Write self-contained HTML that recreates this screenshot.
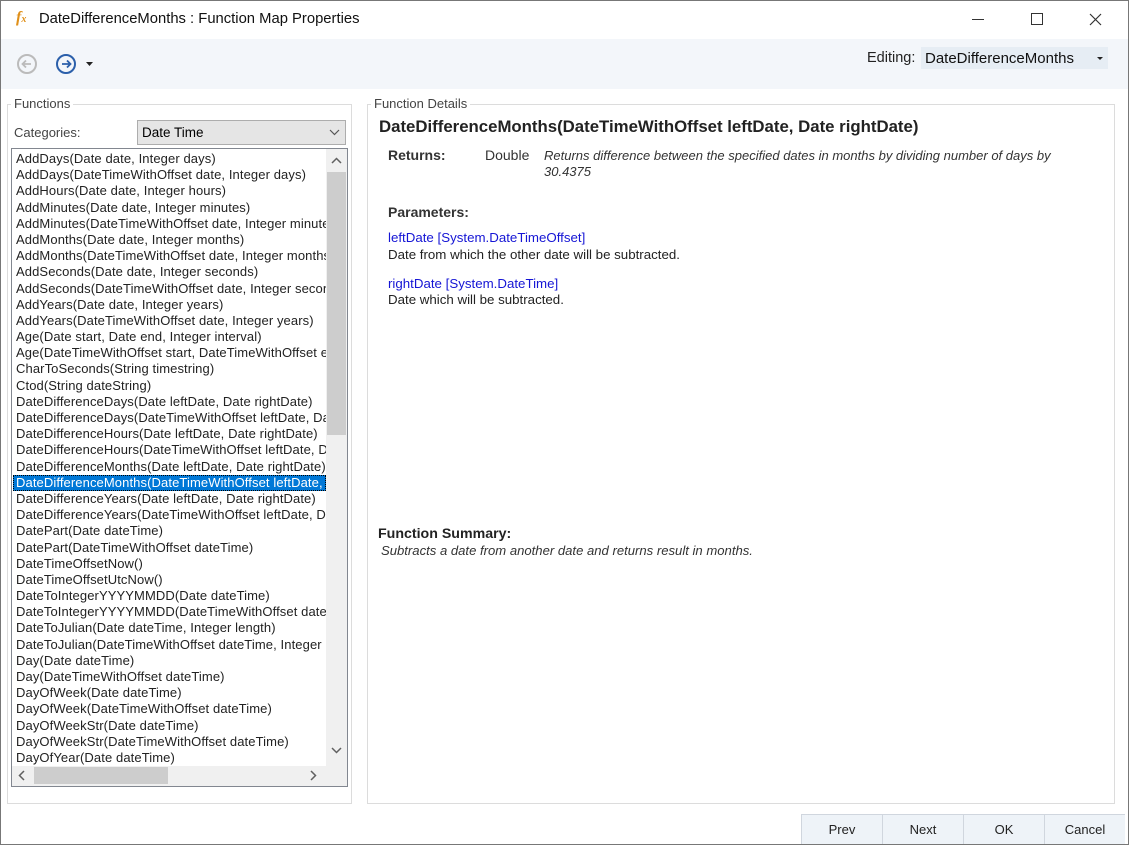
<!DOCTYPE html>
<html><head><meta charset="utf-8"><style>
*{margin:0;padding:0;box-sizing:border-box}
body{width:1129px;height:845px;background:#fff;font-family:"Liberation Sans",sans-serif;font-size:12px;color:#000;position:relative;overflow:hidden}
.a{position:absolute}
.win{left:0;top:0;width:1129px;height:845px;border:1px solid #777}
.list div{height:16.2px;line-height:16px;white-space:nowrap;padding-left:3px;font-size:13px;letter-spacing:0.1px;color:#222}
.list .sel{background:#0078d7;color:#fff;outline:1px dotted #000;outline-offset:-1px}
.grp{border:1px solid #dcdcdc}
.btn{top:814px;width:81px;height:30px;background:#eef3f8;border-left:1px solid #d0d6de;border-top:1px solid #d0d6de;text-align:center;line-height:29px;font-size:13px;color:#222}
</style></head><body>
<div class="a win"></div>
<div class="a" style="left:16px;top:9px;font-family:'Liberation Serif',serif;font-style:italic;font-weight:bold;color:#e0901a;font-size:16px">f<span style="font-size:10px">x</span></div>
<div class="a" style="left:39px;top:11px;font-size:14.8px;color:#111">DateDifferenceMonths : Function Map Properties</div>
<div class="a" style="left:972px;top:19px;width:12px;height:1px;background:#333"></div>
<div class="a" style="left:1031px;top:13px;width:12px;height:12px;border:1px solid #333"></div>
<svg class="a" style="left:1089px;top:13px" width="13" height="13"><path d="M1 1L12 12M12 1L1 12" stroke="#333" stroke-width="1.2"/></svg>
<div class="a" style="left:1px;top:39px;width:1127px;height:50px;background:#f3f6fa"></div>
<svg class="a" style="left:16px;top:53px" width="22" height="22"><circle cx="11" cy="11" r="9" fill="none" stroke="#bbb" stroke-width="2"/><path d="M15 11H7M10 7.5L6.5 11L10 14.5" fill="none" stroke="#bbb" stroke-width="1.8"/></svg>
<svg class="a" style="left:55px;top:53px" width="22" height="22"><circle cx="11" cy="11" r="9" fill="none" stroke="#2b5faa" stroke-width="2"/><path d="M7 11H15M12 7.5L15.5 11L12 14.5" fill="none" stroke="#2b5faa" stroke-width="1.8"/></svg>
<svg class="a" style="left:86px;top:62px" width="7" height="4"><path d="M0 0H7L3.5 4Z" fill="#222"/></svg>
<div class="a" style="left:867px;top:50px;font-size:14.5px;color:#222">Editing:</div>
<div class="a" style="left:921px;top:47px;width:187px;height:22px;background:#e6edf4"></div>
<div class="a" style="left:925px;top:50px;font-size:15px;color:#111">DateDifferenceMonths</div>
<svg class="a" style="left:1097px;top:57px" width="6" height="3"><path d="M0 0H6L3 3Z" fill="#222"/></svg>
<div class="a grp" style="left:7px;top:104px;width:345px;height:700px"></div>
<div class="a" style="left:11px;top:96px;background:#fff;padding:0 3px;font-size:13px;color:#444">Functions</div>
<div class="a" style="left:14px;top:125px;font-size:13px;color:#444">Categories:</div>
<div class="a" style="left:137px;top:120px;width:209px;height:25px;background:#e5e5e5;border:1px solid #adadad"></div>
<div class="a" style="left:142px;top:125px;font-size:13.5px">Date Time</div>
<svg class="a" style="left:329px;top:129px" width="11" height="7"><path d="M1 1L5.5 5.5L10 1" fill="none" stroke="#555" stroke-width="1.2"/></svg>
<div class="a" style="left:11px;top:148px;width:337px;height:639px;border:1px solid #828790;background:#fff;overflow:hidden">
<div class="a list" style="left:1px;top:2px;width:313px;height:614px;overflow:hidden">
<div>AddDays(Date date, Integer days)</div>
<div>AddDays(DateTimeWithOffset date, Integer days)</div>
<div>AddHours(Date date, Integer hours)</div>
<div>AddMinutes(Date date, Integer minutes)</div>
<div>AddMinutes(DateTimeWithOffset date, Integer minutes)</div>
<div>AddMonths(Date date, Integer months)</div>
<div>AddMonths(DateTimeWithOffset date, Integer months)</div>
<div>AddSeconds(Date date, Integer seconds)</div>
<div>AddSeconds(DateTimeWithOffset date, Integer seconds)</div>
<div>AddYears(Date date, Integer years)</div>
<div>AddYears(DateTimeWithOffset date, Integer years)</div>
<div>Age(Date start, Date end, Integer interval)</div>
<div>Age(DateTimeWithOffset start, DateTimeWithOffset end)</div>
<div>CharToSeconds(String timestring)</div>
<div>Ctod(String dateString)</div>
<div>DateDifferenceDays(Date leftDate, Date rightDate)</div>
<div>DateDifferenceDays(DateTimeWithOffset leftDate, Date rightDate)</div>
<div>DateDifferenceHours(Date leftDate, Date rightDate)</div>
<div>DateDifferenceHours(DateTimeWithOffset leftDate, Date rightDate)</div>
<div>DateDifferenceMonths(Date leftDate, Date rightDate)</div>
<div class="sel">DateDifferenceMonths(DateTimeWithOffset leftDate, Date rightDate)</div>
<div>DateDifferenceYears(Date leftDate, Date rightDate)</div>
<div>DateDifferenceYears(DateTimeWithOffset leftDate, Date rightDate)</div>
<div>DatePart(Date dateTime)</div>
<div>DatePart(DateTimeWithOffset dateTime)</div>
<div>DateTimeOffsetNow()</div>
<div>DateTimeOffsetUtcNow()</div>
<div>DateToIntegerYYYYMMDD(Date dateTime)</div>
<div>DateToIntegerYYYYMMDD(DateTimeWithOffset dateTime)</div>
<div>DateToJulian(Date dateTime, Integer length)</div>
<div>DateToJulian(DateTimeWithOffset dateTime, Integer length)</div>
<div>Day(Date dateTime)</div>
<div>Day(DateTimeWithOffset dateTime)</div>
<div>DayOfWeek(Date dateTime)</div>
<div>DayOfWeek(DateTimeWithOffset dateTime)</div>
<div>DayOfWeekStr(Date dateTime)</div>
<div>DayOfWeekStr(DateTimeWithOffset dateTime)</div>
<div>DayOfYear(Date dateTime)</div>
</div>
<div class="a" style="left:314px;top:0;width:21px;height:617px;background:#f0f0f0"></div>
<div class="a" style="left:315px;top:23px;width:19px;height:263px;background:#cdcdcd"></div>
<svg class="a" style="left:319px;top:8px" width="11" height="7"><path d="M1 6L5.5 1.5L10 6" fill="none" stroke="#606060" stroke-width="1.5"/></svg>
<svg class="a" style="left:319px;top:598px" width="11" height="7"><path d="M1 1L5.5 5.5L10 1" fill="none" stroke="#606060" stroke-width="1.5"/></svg>
<div class="a" style="left:0;top:617px;width:335px;height:20px;background:#f0f0f0"></div>
<div class="a" style="left:22px;top:618px;width:134px;height:17px;background:#cdcdcd"></div>
<svg class="a" style="left:6px;top:621px" width="7" height="11"><path d="M6 1L1.5 5.5L6 10" fill="none" stroke="#606060" stroke-width="1.5"/></svg>
<svg class="a" style="left:298px;top:621px" width="7" height="11"><path d="M1 1L5.5 5.5L1 10" fill="none" stroke="#606060" stroke-width="1.5"/></svg>
</div>
<div class="a grp" style="left:367px;top:104px;width:748px;height:700px"></div>
<div class="a" style="left:371px;top:96px;background:#fff;padding:0 3px;font-size:13px;color:#444">Function Details</div>
<div class="a" style="left:379px;top:117px;font-size:16.8px;font-weight:bold;color:#222;white-space:nowrap">DateDifferenceMonths(DateTimeWithOffset leftDate, Date rightDate)</div>
<div class="a" style="left:388px;top:147px;font-size:14px;font-weight:bold;color:#333">Returns:</div>
<div class="a" style="left:485px;top:147px;font-size:14px;color:#333">Double</div>
<div class="a" style="left:544px;top:148px;width:540px;font-size:13px;font-style:italic;color:#333;line-height:15.5px">Returns difference between the specified dates in months by dividing number of days by 30.4375</div>
<div class="a" style="left:388px;top:204px;font-size:14px;font-weight:bold;color:#333">Parameters:</div>
<div class="a" style="left:388px;top:230px;font-size:13.3px;color:#1515d5">leftDate [System.DateTimeOffset]</div>
<div class="a" style="left:388px;top:247px;font-size:13.3px;color:#222">Date from which the other date will be subtracted.</div>
<div class="a" style="left:388px;top:276px;font-size:13.3px;color:#1515d5">rightDate [System.DateTime]</div>
<div class="a" style="left:388px;top:292px;font-size:13.3px;color:#222">Date which will be subtracted.</div>
<div class="a" style="left:378px;top:526px;font-size:14.2px;font-weight:bold;color:#222">Function Summary:</div>
<div class="a" style="left:381px;top:543px;font-size:13.1px;font-style:italic;color:#333">Subtracts a date from another date and returns result in months.</div>
<div class="a btn" style="left:801px">Prev</div>
<div class="a btn" style="left:882px">Next</div>
<div class="a btn" style="left:963px">OK</div>
<div class="a btn" style="left:1044px">Cancel</div>
</body></html>
